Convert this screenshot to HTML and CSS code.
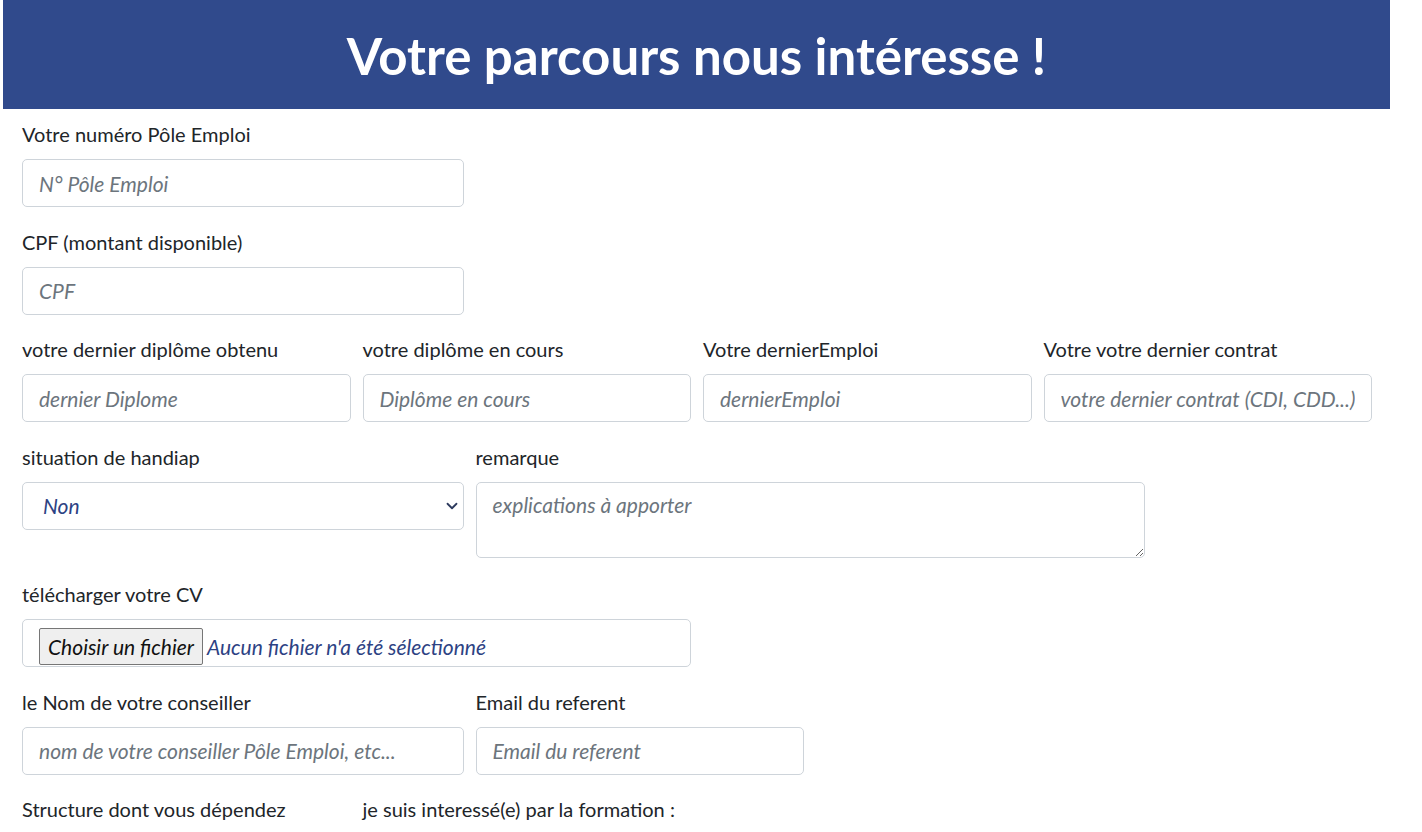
FILE: index.html
```html
<!DOCTYPE html>
<html lang="fr">
<head>
<meta charset="utf-8">
<title>Votre parcours nous intéresse !</title>
<link rel="stylesheet" href="styles.css">
</head>
<body>
<div class="page">
  <header class="hero">
    <h1 class="hero-title">Votre parcours nous intéresse !</h1>
  </header>
  <form class="form">
    <div class="row">
      <div class="col col-4">
        <label class="label">Votre numéro Pôle Emploi</label>
        <input class="control" type="text" placeholder="N° Pôle Emploi">
      </div>
    </div>
    <div class="row">
      <div class="col col-4">
        <label class="label">CPF (montant disponible)</label>
        <input class="control" type="text" placeholder="CPF">
      </div>
    </div>
    <div class="row">
      <div class="col col-3">
        <label class="label">votre dernier diplôme obtenu</label>
        <input class="control" type="text" placeholder="dernier Diplome">
      </div>
      <div class="col col-3">
        <label class="label">votre diplôme en cours</label>
        <input class="control" type="text" placeholder="Diplôme en cours">
      </div>
      <div class="col col-3">
        <label class="label">Votre dernierEmploi</label>
        <input class="control" type="text" placeholder="dernierEmploi">
      </div>
      <div class="col col-3">
        <label class="label">Votre votre dernier contrat</label>
        <input class="control" type="text" placeholder="votre dernier contrat (CDI, CDD...)">
      </div>
    </div>
    <div class="row row-tall">
      <div class="col col-4">
        <label class="label">situation de handiap</label>
        <div class="select-wrap">
          <select class="control select">
            <option>Non</option>
            <option>Oui</option>
          </select>
          <svg class="chevron" viewBox="0 0 16 16" width="12" height="12"><path d="M2 5l6 6 6-6" fill="none" stroke="#2d3a5e" stroke-width="2.4" stroke-linecap="round" stroke-linejoin="round"/></svg>
        </div>
      </div>
      <div class="col col-6">
        <label class="label">remarque</label>
        <textarea class="control textarea" placeholder="explications à apporter"></textarea>
      </div>
    </div>
    <div class="row">
      <div class="col col-6">
        <label class="label">télécharger votre CV</label>
        <div class="control file">
          <button type="button" class="file-btn">Choisir un fichier</button>
          <span class="file-name">Aucun fichier n'a été sélectionné</span>
        </div>
      </div>
    </div>
    <div class="row">
      <div class="col col-4">
        <label class="label">le Nom de votre conseiller</label>
        <input class="control" type="text" placeholder="nom de votre conseiller Pôle Emploi, etc...">
      </div>
      <div class="col col-3">
        <label class="label">Email du referent</label>
        <input class="control" type="text" placeholder="Email du referent">
      </div>
    </div>
    <div class="row">
      <div class="col col-3">
        <label class="label">Structure dont vous dépendez</label>
      </div>
      <div class="col col-4">
        <label class="label">je suis interessé(e) par la formation :</label>
      </div>
    </div>
  </form>
</div>
</body>
</html>
```

FILE: styles.css
```css
* { box-sizing: border-box; }
html, body { margin: 0; padding: 0; background: #fff; }
body {
  font-family: "Lato", "Noto Sans", sans-serif;
  color: #212529;
  overflow: hidden;
}
.page {
  margin-left: 3px;
  width: 1387px;
}
.hero {
  background: #304a8c;
  height: 109px;
  display: flex;
  align-items: center;
  justify-content: center;
}
.hero-title {
  margin: 0;
  color: #fff;
  font-size: 51px;
  font-weight: 700;
  line-height: 1;
  padding-top: 2px;
}
.form {
  padding: 12px 0 0 13px;
  width: 1375px;
}
.row {
  display: flex;
  margin-bottom: 21.5px;
}
.row-tall { margin-bottom: 23.5px; }
.col { padding: 0 6px; }
.col-3 { width: 340.5px; }
.col-4 { width: 453.5px; }
.col-6 { width: 681px; }
.label {
  display: block;
  font-size: 20px;
  line-height: 27px;
  margin-bottom: 11px;
}
.control {
  display: block;
  width: 100%;
  height: 48px;
  padding: 8px 16px;
  font-family: inherit;
  font-size: 21px;
  font-style: italic;
  color: #2d4283;
  background: #fff;
  border: 1px solid #ced4da;
  border-radius: 5px;
  outline: none;
}
.control::placeholder { color: #6c757d; font-style: italic; }
.select-wrap { position: relative; }
.select {
  appearance: none;
  -webkit-appearance: none;
  padding-left: 20px;
}
.chevron {
  position: absolute;
  right: 6px;
  top: 18px;
  pointer-events: none;
}
.textarea {
  height: 76px;
  resize: vertical;
  padding-top: 9px;
}
.file {
  display: flex;
  align-items: center;
  padding: 8px 16px 1px;
  gap: 4px;
}
.file-btn {
  height: 37px;
  padding: 0 8px;
  font-family: inherit;
  font-size: 21px;
  font-style: italic;
  color: #111;
  background: #efefef;
  border: 1px solid #767676;
  border-radius: 2px;
}
.file-name { font-size: 21px; }
```
